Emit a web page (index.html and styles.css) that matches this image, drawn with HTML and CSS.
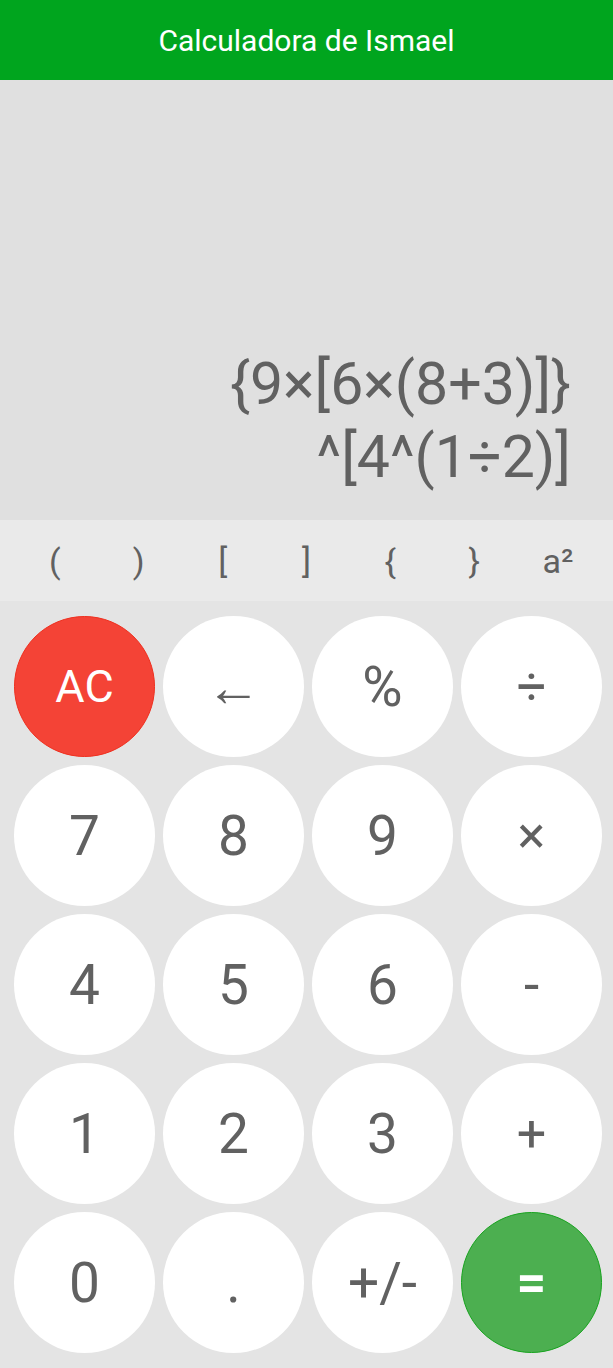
FILE: index.html
```html
<!DOCTYPE html>
<html lang="es">
<head>
<meta charset="utf-8">
<title>Calculadora de Ismael</title>
<link rel="stylesheet" href="styles.css">
</head>
<body>
<div class="app">
  <header class="topbar">Calculadora de Ismael</header>
  <section class="display">
    <div class="expr">{9×[6×(8+3)]}<br>^[4^(1÷2)]</div>
  </section>
  <nav class="brackets">
    <span class="br">(</span>
    <span class="br">)</span>
    <span class="br">[</span>
    <span class="br">]</span>
    <span class="br">{</span>
    <span class="br">}</span>
    <span class="br sq">a²</span>
  </nav>
  <main class="keypad">
    <button class="key key-ac">AC</button>
    <button class="key">←</button>
    <button class="key">%</button>
    <button class="key key-op">÷</button>
    <button class="key">7</button>
    <button class="key">8</button>
    <button class="key">9</button>
    <button class="key key-op">×</button>
    <button class="key">4</button>
    <button class="key">5</button>
    <button class="key">6</button>
    <button class="key">-</button>
    <button class="key">1</button>
    <button class="key">2</button>
    <button class="key">3</button>
    <button class="key key-op">+</button>
    <button class="key">0</button>
    <button class="key">.</button>
    <button class="key">+/-</button>
    <button class="key key-eq">=</button>
  </main>
</div>
</body>
</html>
```
FILE: styles.css
```css
* { box-sizing: border-box; }
html, body {
  margin: 0;
  padding: 0;
  background: #e4e4e4;
  font-family: Roboto, "Liberation Sans", sans-serif;
}
.app {
  width: 613px;
  height: 1368px;
  display: flex;
  flex-direction: column;
  overflow: hidden;
}
.topbar {
  height: 80px;
  background: #00a51e;
  color: #ffffff;
  font-size: 30px;
  display: flex;
  align-items: center;
  justify-content: center;
}
.display {
  height: 440px;
  background: #e0e0e0;
  display: flex;
  justify-content: flex-end;
  align-items: flex-end;
  padding: 0 42px 27px 0;
}
.expr {
  text-align: right;
  color: #616161;
  font-size: 59px;
  line-height: 73px;
}
.brackets {
  height: 81px;
  background: #eaeaea;
  display: grid;
  grid-template-columns: repeat(7, 1fr);
  padding: 0 13px;
  align-items: center;
  justify-items: center;
  color: #616161;
  font-size: 34px;
}
.keypad {
  flex: 1;
  background: #e4e4e4;
  display: grid;
  grid-template-columns: repeat(4, 141px);
  grid-auto-rows: 141px;
  gap: 8px;
  padding: 15px 11px 15px 14px;
}
.key {
  width: 141px;
  height: 141px;
  border-radius: 50%;
  border: none;
  background: #ffffff;
  color: #616161;
  font-family: Roboto, "Liberation Sans", sans-serif;
  font-size: 55px;
  padding: 0;
  display: flex;
  align-items: center;
  justify-content: center;
}
.key-op { font-size: 52px; }
.key-ac {
  background: #f44336;
  border: 1px solid #ef2f1e;
  color: #ffffff;
  font-size: 45px;
}
.key-eq {
  background: #4caf50;
  border: 1px solid #17a31e;
  color: #ffffff;
  font-weight: 700;
  font-size: 52px;
}
```
